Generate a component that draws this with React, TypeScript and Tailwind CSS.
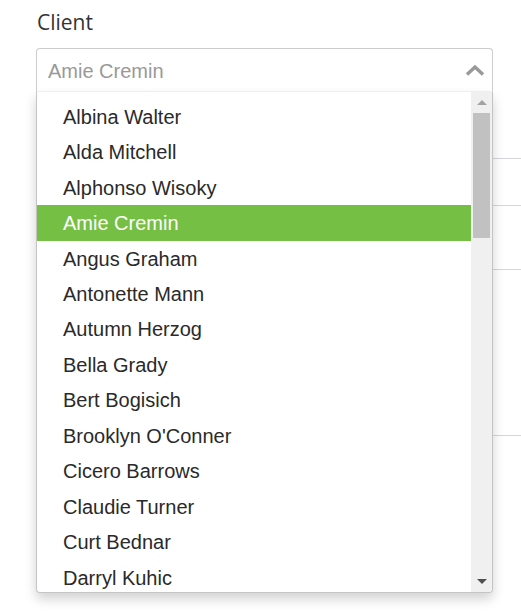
const clients = [
  "Albina Walter",
  "Alda Mitchell",
  "Alphonso Wisoky",
  "Amie Cremin",
  "Angus Graham",
  "Antonette Mann",
  "Autumn Herzog",
  "Bella Grady",
  "Bert Bogisich",
  "Brooklyn O'Conner",
  "Cicero Barrows",
  "Claudie Turner",
  "Curt Bednar",
  "Darryl Kuhic",
]

const selected = "Amie Cremin"

export default function App() {
  return (
    <div className="relative w-[521px] h-[613px] overflow-hidden bg-white">
      <label
        className="block pl-[37px] pt-[7px] h-[48px] text-[21px] leading-[30px] text-[#333]"
        style={{ fontFamily: "'Open Sans', sans-serif" }}
      >
        Client
      </label>

      {/* select input */}
      <div
        className="ml-[36px] w-[457px] h-[44px] flex items-center justify-between pl-[11px] pr-[7px] border border-[#ccc] border-b-[#f3f3f3] rounded-t-[4px] bg-white"
        style={{ fontFamily: "'Liberation Sans', Arial, sans-serif" }}
      >
        <span className="text-[20px] text-[#999] pt-[1px]">{selected}</span>
        <svg width="20" height="12" viewBox="0 0 20 12" className="-mt-[1px]">
          <polyline points="2,10.5 10,3 18,10.5" fill="none" stroke="#999" strokeWidth="3.4" />
        </svg>
      </div>

      {/* table rows behind the menu */}
      <div className="ml-[36px]">
        <div className="h-[67px] border-b border-[#d3d6db]" />
        <div className="h-[47px] border-b border-[#d3d6db]" />
        <div className="h-[64px] border-b border-[#d3d6db]" />
        <div className="h-[166px] border-b border-[#d3d6db]" />
      </div>

      {/* dropdown menu */}
      <div
        className="absolute left-[36px] top-[92px] w-[457px] h-[501px] flex bg-white border border-t-0 border-[#c4c4c4] rounded-b-[4px] shadow-[0_6px_12px_rgba(0,0,0,0.18)] overflow-hidden"
        style={{ fontFamily: "'Liberation Sans', Arial, sans-serif" }}
      >
        <ul className="flex-1 pt-[7px] overflow-hidden">
          {clients.map((name) => (
            <li
              key={name}
              className={
                name === selected
                  ? "h-[35.46px] flex items-center pl-[26px] text-[20px] text-white bg-[#75bf45]"
                  : "h-[35.46px] flex items-center pl-[26px] text-[20px] text-[#2a2a2a]"
              }
            >
              {name}
            </li>
          ))}
        </ul>

        {/* scrollbar */}
        <div className="w-[21px] bg-[#f0f0f0] flex flex-col items-center">
          <div className="h-[21px] flex items-center justify-center">
            <svg width="10" height="6" viewBox="0 0 10 6">
              <polygon points="0,5 5,0 10,5" fill="#a3a3a3" />
            </svg>
          </div>
          <div className="w-[17px] h-[125px] bg-[#c1c1c1]" />
          <div className="flex-1" />
          <div className="h-[21px] flex items-center justify-center">
            <svg width="10" height="6" viewBox="0 0 10 6">
              <polygon points="0,0 10,0 5,5" fill="#505050" />
            </svg>
          </div>
        </div>
      </div>
    </div>
  )
}
